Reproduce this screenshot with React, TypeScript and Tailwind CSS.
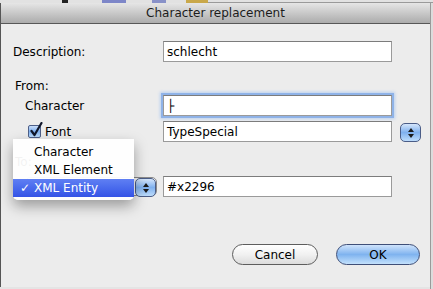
import { useState } from 'react'

const font = { fontFamily: '"DejaVu Sans", "Liberation Sans", sans-serif' }

function TextBox({ value, focused }: { value: string; focused?: boolean }) {
  return (
    <div
      className={`h-[21px] w-[229px] bg-white border border-[#9a9a9a] border-t-[#7c7c7c] flex items-center pl-[3px] text-[12px] text-black ${
        focused ? 'shadow-[0_0_0_2px_#8fb3e8,0_0_3px_3px_#b9d0f0]' : ''
      }`}
    >
      {value}
    </div>
  )
}

function Stepper() {
  return (
    <div className="w-[21px] h-[19px] rounded-[5px] border border-[#4b5d87] bg-gradient-to-b from-[#d5e6fb] via-[#7fb0ee] to-[#bddcfb] flex flex-col items-center justify-center gap-[2px]">
      <div className="w-0 h-0 border-l-[3px] border-r-[3px] border-b-[4px] border-l-transparent border-r-transparent border-b-[#1b1b1b]" />
      <div className="w-0 h-0 border-l-[3px] border-r-[3px] border-t-[4px] border-l-transparent border-r-transparent border-t-[#1b1b1b]" />
    </div>
  )
}

export default function App() {
  const [fontOn] = useState(true)
  const menu = ['Character', 'XML Element', 'XML Entity']

  return (
    <div className="w-[433px] h-[289px] bg-[#e4e4e4] relative overflow-hidden flex flex-col" style={font}>
      {/* app toolbar peeking above the sheet */}
      <div className="h-[3px] bg-[#e2e2e2] flex">
        <div className="w-[62px]" />
        <div className="w-[6px] bg-[#222]" />
        <div className="w-[34px]" />
        <div className="w-[24px] bg-[#7d86c8]" />
        <div className="w-[26px]" />
        <div className="w-[14px] bg-[#8891c8]" />
        <div className="w-[20px]" />
        <div className="w-[22px] bg-[#c9a84a]" />
        <div className="flex-1 border-b border-[#9a9a9a]" />
      </div>

      <div className="flex flex-1">
        <div className="w-[430px] h-[284px] bg-[#ececec] border-l border-[#555] flex flex-col">
          {/* title bar */}
          <div className="h-[21px] bg-gradient-to-b from-[#e6e6e6] to-[#acacac] border-b border-[#575757] flex items-center justify-center text-[12px] text-[#1c1c1c]">
            Character replacement
          </div>

          <div className="relative flex-1 flex flex-col pl-[12px] pt-[17px]">
            <div className="flex items-center h-[21px]">
              <div className="w-[150px] text-[12px] text-black">Description:</div>
              <TextBox value="schlecht" />
            </div>

            <div className="mt-[16px] h-[15px] flex items-center pl-[2px] text-[12px] text-black">From:</div>

            <div className="mt-[2px] flex items-center h-[21px]">
              <div className="w-[150px] pl-[12px] text-[12px] text-black">Character</div>
              <TextBox value="├" focused />
            </div>

            <div className="mt-[5px] flex items-center h-[21px]">
              <div className="w-[150px] pl-[15px] flex items-center gap-[4px] text-[12px] text-black">
                <div className="w-[13px] h-[13px] rounded-[2px] border border-[#4d5f88] bg-gradient-to-b from-[#c9defa] via-[#7eafee] to-[#bcdcfb] relative">
                  {fontOn && (
                    <svg className="absolute left-[1px] top-[-4px]" width="13" height="15" viewBox="0 0 13 15">
                      <path d="M1.5 9 L4.5 13 L11.5 1" fill="none" stroke="#10172b" strokeWidth="2.2" strokeLinecap="round" strokeLinejoin="round" />
                    </svg>
                  )}
                </div>
                Font
              </div>
              <TextBox value="TypeSpecial" />
              <div className="ml-[8px] mt-[2px]">
                <Stepper />
              </div>
            </div>

            <div className="mt-[12px] h-[15px] flex items-center pl-[2px] text-[12px] text-black">To:</div>

            <div className="mt-[7px] flex items-center h-[21px]">
              <div className="w-[150px] pl-[12px]">
                <div className="w-[132px] h-[19px] rounded-[5px] border border-[#8a8a8a] bg-white flex justify-end">
                  <Stepper />
                </div>
              </div>
              <TextBox value="#x2296" />
            </div>

            <div className="mt-[47px] flex justify-end gap-[18px] pr-[10px]">
              <div className="w-[86px] h-[21px] rounded-full border border-[#5d5d5d] bg-gradient-to-b from-[#ffffff] via-[#f1f1f1] to-[#dcdcdc] flex items-center justify-center text-[12px] text-black">
                Cancel
              </div>
              <div className="w-[84px] h-[21px] rounded-full border border-[#3f4f78] bg-gradient-to-b from-[#cfe3fb] via-[#7fb3ef] to-[#c3e1fc] flex items-center justify-center text-[12px] text-black">
                OK
              </div>
            </div>

            {/* popup menu */}
            <div className="absolute left-[12px] top-[115px] w-[121px] pt-[4px] pb-[3px] bg-white/95 rounded-b-[5px] shadow-[0_6px_14px_rgba(0,0,0,0.35)] text-[12px]">
              {menu.map((m, i) => (
                <div
                  key={m}
                  className={`h-[18px] flex items-center ${
                    i === 2 ? 'bg-gradient-to-b from-[#5f7ff3] to-[#3553e6] text-white' : 'text-black'
                  }`}
                >
                  <span className="w-[21px] pl-[7px]">{i === 2 ? '✓' : ''}</span>
                  {m}
                </div>
              ))}
            </div>
          </div>
        </div>
        <div className="flex-1 bg-[#dcdcdc] border-l border-[#9a9a9a]" />
      </div>
    </div>
  )
}
